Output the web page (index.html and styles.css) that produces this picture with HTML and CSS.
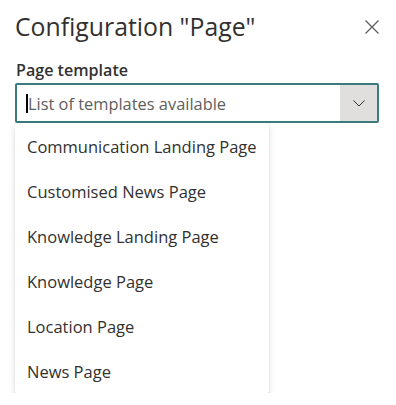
FILE: index.html
```html
<!DOCTYPE html>
<html lang="en">
<head>
<meta charset="utf-8">
<title>Configuration Page</title>
<link rel="stylesheet" href="styles.css">
</head>
<body>
<div class="panel">
  <div class="header">
    <h1 class="title">Configuration "Page"</h1>
    <span class="close-x">
      <svg width="14" height="14" viewBox="0 0 14 14"><path d="M0.5 0.5 L13.5 13.5 M13.5 0.5 L0.5 13.5" stroke="#605e5c" stroke-width="1.3" fill="none"/></svg>
    </span>
  </div>
  <div class="field-label">Page template</div>
  <div class="combo">
    <div class="field">
      <span class="caret"></span>
      <span class="placeholder">List of templates available</span>
    </div>
    <div class="chevron">
      <svg width="12" height="7" viewBox="0 0 12 7"><path d="M0.5 0.5 L6 6 L11.5 0.5" stroke="#323130" stroke-width="1" fill="none"/></svg>
    </div>
  </div>
  <div class="tpl-list">
    <div class="tpl-item">Communication Landing Page</div>
    <div class="tpl-item">Customised News Page</div>
    <div class="tpl-item">Knowledge Landing Page</div>
    <div class="tpl-item">Knowledge Page</div>
    <div class="tpl-item">Location Page</div>
    <div class="tpl-item">News Page</div>
  </div>
</div>
</body>
</html>
```
FILE: styles.css
```css
* { box-sizing: border-box; }
html, body {
  margin: 0;
  padding: 0;
  background: #ffffff;
  font-family: "Open Sans", "Noto Sans", sans-serif;
  color: #323130;
}
.panel {
  padding: 10px 17px 0 15px;
}
.header {
  display: flex;
  justify-content: space-between;
  align-items: flex-start;
  height: 50px;
}
.title {
  margin: 0;
  font-size: 24.8px;
  line-height: 32px;
  font-weight: 400;
  color: #323130;
}
.close-x {
  margin-top: 10px;
  width: 14px;
  height: 14px;
  display: block;
}
.close-x svg { display: block; }
.field-label {
  font-size: 16.1px;
  line-height: 20px;
  font-weight: 600;
  color: #323130;
  padding-left: 1px;
}
.combo {
  margin-top: 3px;
  height: 40px;
  border: 2px solid #3b7b7f;
  border-radius: 2px;
  display: flex;
}
.field {
  flex: 1;
  display: flex;
  align-items: center;
  padding-left: 9px;
}
.caret {
  width: 2px;
  height: 19px;
  background: #000;
}
.placeholder {
  font-size: 16.4px;
  color: #605e5c;
  line-height: 22px;
  padding-top: 1px;
}
.chevron {
  width: 37px;
  background: #e1dfdd;
  display: flex;
  align-items: center;
  justify-content: center;
  padding-left: 1px;
}
.chevron svg { display: block; }
.tpl-list {
  width: 254px;
  background: #ffffff;
  border-radius: 2px;
  box-shadow: 0 3.2px 7.2px rgba(0,0,0,0.132), 0 0.6px 1.8px rgba(0,0,0,0.108);
}
.tpl-item {
  height: 45px;
  padding: 2px 12px 0;
  font-size: 16.5px;
  line-height: 43px;
  color: #323130;
  white-space: nowrap;
}
```
